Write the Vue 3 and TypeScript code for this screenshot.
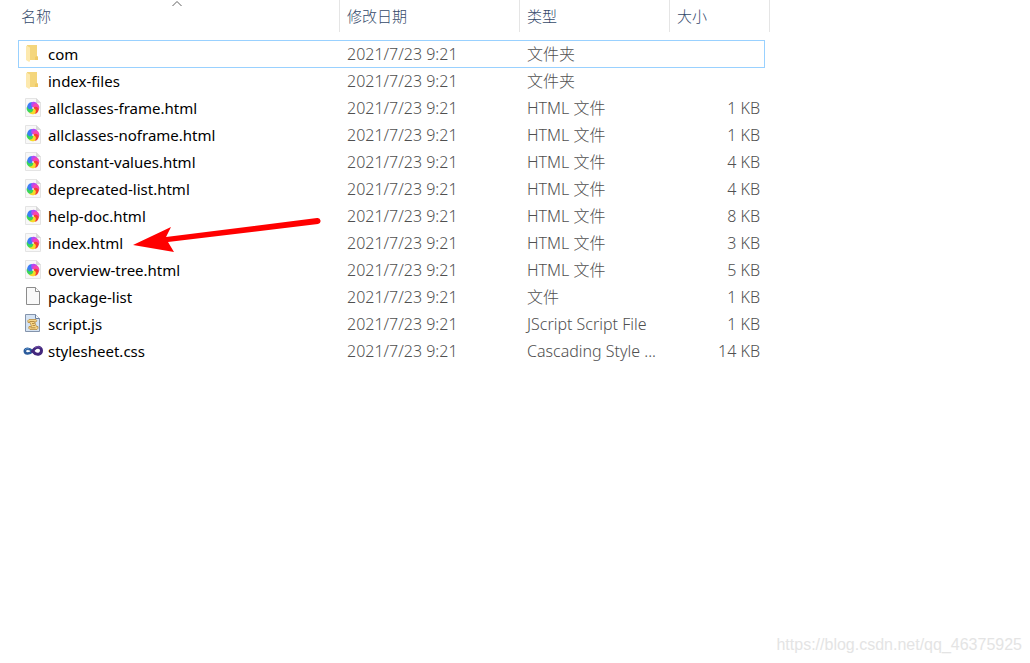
<script setup lang="ts">
type Kind = 'folder' | 'html' | 'blank' | 'script' | 'style'

interface Entry {
  name: string
  kind: Kind
  type: string
  size: string
}

const modified = '2021/7/23 9:21'
const htmlType = 'HTML 文件'

const entries: Entry[] = [
  { name: 'com', kind: 'folder', type: '文件夹', size: '' },
  { name: 'index-files', kind: 'folder', type: '文件夹', size: '' },
  { name: 'allclasses-frame.html', kind: 'html', type: htmlType, size: '1 KB' },
  { name: 'allclasses-noframe.html', kind: 'html', type: htmlType, size: '1 KB' },
  { name: 'constant-values.html', kind: 'html', type: htmlType, size: '4 KB' },
  { name: 'deprecated-list.html', kind: 'html', type: htmlType, size: '4 KB' },
  { name: 'help-doc.html', kind: 'html', type: htmlType, size: '8 KB' },
  { name: 'index.html', kind: 'html', type: htmlType, size: '3 KB' },
  { name: 'overview-tree.html', kind: 'html', type: htmlType, size: '5 KB' },
  { name: 'package-list', kind: 'blank', type: '文件', size: '1 KB' },
  { name: 'script.js', kind: 'script', type: 'JScript Script File', size: '1 KB' },
  { name: 'stylesheet.css', kind: 'style', type: 'Cascading Style ...', size: '14 KB' },
]

const petals = ['#b44af5', '#f547b0', '#f5402f', '#f5dc28', '#3ad65a', '#3d7df5']
</script>

<template>
  <main class="explorer">
    <table class="files">
      <colgroup>
        <col class="col-name" />
        <col class="col-date" />
        <col class="col-type" />
        <col class="col-size" />
      </colgroup>
      <thead>
        <tr>
          <th aria-sort="ascending">
            <button type="button">
              名称
              <svg class="sort" width="11" height="7" viewBox="0 0 11 7" aria-hidden="true">
                <path d="M1 6 5.500 1.500 10 6" fill="none" stroke="#606060" />
              </svg>
            </button>
          </th>
          <th><button type="button">修改日期</button></th>
          <th><button type="button">类型</button></th>
          <th><button type="button">大小</button></th>
        </tr>
      </thead>
      <tbody>
        <tr v-for="(entry, i) in entries" :key="entry.name" :class="{ focused: i === 0 }">
          <td class="name">
            <div class="label">
              <svg class="icon" width="22" height="22" viewBox="0 0 22 22" aria-hidden="true">
                <g v-if="entry.kind === 'folder'">
                  <path d="M5 2h10v11l1 1v3H7z" fill="#f4d67c" />
                  <path d="M13 14l2-1 1 1v3h-3z" fill="#efca66" />
                  <path d="M4 2.500l4 2v13.500l-.8 1L4 17z" fill="#fde9ae" />
                </g>
                <g v-else-if="entry.kind === 'html'">
                  <path d="M3.500 1.500h11l4 4v14h-15z" fill="#f8f8f8" stroke="#e4e4e4" />
                  <path d="M14 1l5 5h-5z" fill="#d9d9d9" />
                  <g transform="translate(11 11)">
                    <path
                      v-for="(color, p) in petals"
                      :key="color"
                      d="M0 0C-3-.8-3.800-3.500-1.800-5.700 1-7 4-5.800 4.300-3.800 2-4 .6-2.500 0 0z"
                      :fill="color"
                      :transform="`rotate(${p * 60})`"
                    />
                    <circle r="1" fill="#fff" fill-opacity=".7" />
                  </g>
                </g>
                <g v-else-if="entry.kind === 'blank'">
                  <path d="M4.500 1.500h9l4 4v13h-13z" fill="#f9f9f9" stroke="#8c8c8c" />
                  <path d="M13.500 1.500v4h4" fill="#fff" stroke="#8c8c8c" />
                </g>
                <g v-else-if="entry.kind === 'script'">
                  <path d="M3.500 1.500h10l4 4v13h-14z" fill="#d5e3f3" stroke="#8494ac" />
                  <path d="M13.500 1.500v4h4" fill="#f4f8fc" stroke="#6b7f9c" />
                  <path
                    d="M7 6.500h7q1.500 1 0 2.500h-1.500l2 4.500H16q.5 2-1 3H8q-2-1-1-3h2.500L8 9.500H6q-1-2 1-3z"
                    fill="#f6d68a"
                    stroke="#b98c3c"
                    stroke-width=".8"
                  />
                  <path d="M7.500 8.500h5M10 10.500h2.500M10.500 12.500h2.500M8.500 14.800h5" stroke="#a87b30" stroke-width=".8" />
                </g>
                <g v-else fill="none">
                  <path d="M10.500 11.500C8 8 2.800 8 2.800 11s4.700 3.800 7.700 0" stroke="#2c5c9c" stroke-width="2.600" />
                  <path d="M10 12.500c3-7 9.500-6 9.500-2s-5 5.500-8.500 1" stroke="#43277d" stroke-width="3" />
                  <path d="M3 10q1-2 4-1.200" stroke="#5b93cc" />
                  <path d="M13 7.500q3-2 5.500 0" stroke="#7554ad" />
                </g>
              </svg>
              <span>{{ entry.name }}</span>
              <svg
                v-if="entry.name === 'index.html'"
                class="pointer"
                width="190"
                height="36"
                viewBox="0 0 190 36"
                aria-hidden="true"
              >
                <path d="M0 28 38 10l-5 10L184 1a3 3 0 0 1 1 6L35 25l6 10z" fill="#f00" />
              </svg>
            </div>
          </td>
          <td>{{ modified }}</td>
          <td>{{ entry.type }}</td>
          <td class="size">{{ entry.size }}</td>
        </tr>
      </tbody>
    </table>
    <footer class="credit">https://blog.csdn.net/qq_46375925</footer>
  </main>
</template>

<style>
body {
  margin: 0;
  background: #fff;
}
</style>

<style scoped>
.explorer {
  display: flex;
  flex-direction: column;
  justify-content: space-between;
  align-items: flex-start;
  box-sizing: border-box;
  min-height: 100vh;
  padding: 0 8px 8px 14px;
  font-family: 'Noto Sans', 'Noto Sans CJK SC', sans-serif;
  font-size: 15px;
  color: #505050;
}

.files {
  table-layout: fixed;
  width: 756px;
  border-collapse: collapse;
}

.col-name {
  width: 326px;
}

.col-date {
  width: 180px;
}

.col-type {
  width: 150px;
}

.col-size {
  width: 100px;
}

th {
  height: 40px;
  padding: 0;
  vertical-align: top;
}

th button {
  position: relative;
  display: block;
  width: 100%;
  height: 32px;
  padding: 0 7px 2px;
  border: 0;
  border-right: 1px solid #e5e5e5;
  background: none;
  color: #34496a;
  font: inherit;
  font-weight: 300;
  text-align: left;
}

.sort {
  position: absolute;
  top: 0;
  left: 50%;
  transform: translateX(-50%);
}

tbody tr {
  position: relative;
}

.focused::after {
  content: '';
  position: absolute;
  inset: 0 5px -1px 4px;
  border: 1px solid #99d1ff;
}

td {
  height: 27px;
  padding: 0 7px;
  line-height: 26px;
  white-space: nowrap;
  font-size: 16px;
  font-weight: 300;
}

.name {
  padding-left: 8px;
  color: #000;
  font-size: 15px;
  font-weight: 400;
}

.label {
  position: relative;
  display: flex;
  align-items: center;
  gap: 4px;
  width: max-content;
}

.icon {
  flex: none;
}

.pointer {
  position: absolute;
  top: -13px;
  left: 100%;
  margin-left: 10px;
}

.size {
  padding-right: 10px;
  text-align: right;
}

.credit {
  align-self: flex-end;
  font-family: 'Liberation Sans', Arial, sans-serif;
  font-size: 16px;
  line-height: 20px;
  color: #e4e4e4;
}
</style>
